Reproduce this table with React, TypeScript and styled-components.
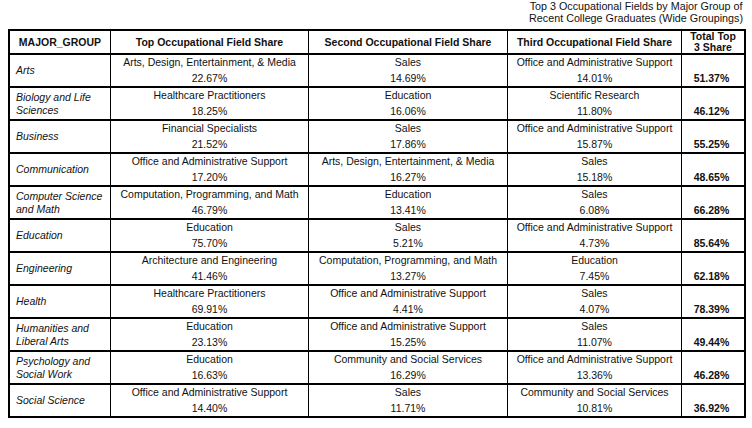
import React from "react";
import styled, { createGlobalStyle } from "styled-components";

const GlobalStyle = createGlobalStyle`
  html, body {
    margin: 0;
    padding: 0;
    background: #ffffff;
  }
  body {
    font-family: "Liberation Sans", Arial, sans-serif;
    color: #111;
  }
`;

const Page = styled.div`
  width: 752px;
  height: 428px;
  padding: 1px 0 0 8px;
  box-sizing: border-box;
  overflow: hidden;
`;

const TitleBar = styled.div`
  display: flex;
  justify-content: flex-end;
  padding-right: 9px;
  margin-bottom: 5px;
`;

const Title = styled.div`
  font-size: 10.75px;
  line-height: 11.5px;
  text-align: center;
  color: #111;
`;

const Table = styled.table`
  border-collapse: separate;
  border-spacing: 0;
  table-layout: fixed;
  width: 738px;
  border-top: 2px solid #000;
  border-left: 2px solid #000;
  font-size: 10.5px;
`;

const HeadCell = styled.th<{ $last?: boolean }>`
  height: 22px;
  padding: 0 2px;
  box-sizing: content-box;
  font-weight: bold;
  font-size: 10.5px;
  line-height: 11px;
  text-align: center;
  vertical-align: middle;
  color: #111;
  border-right: ${(p) => (p.$last ? "2px" : "1px")} solid #000;
  border-bottom: 2px solid #000;
`;

const GroupCell = styled.td`
  height: 31px;
  padding: 0 4px 0 6px;
  font-style: italic;
  font-size: 10.5px;
  line-height: 12.5px;
  text-align: left;
  vertical-align: middle;
  border-right: 1px solid #000;
  border-bottom: 2px solid #000;
`;

const FieldCell = styled.td`
  height: 31px;
  padding: 0;
  text-align: center;
  vertical-align: top;
  border-right: 1px solid #000;
  border-bottom: 2px solid #000;
`;

const Line = styled.div`
  line-height: 15.5px;
  white-space: nowrap;
`;

const TotalCell = styled.td`
  height: 31px;
  padding: 0 3px 0 0;
  text-align: center;
  vertical-align: bottom;
  font-weight: bold;
  line-height: 15.5px;
  border-right: 2px solid #000;
  border-bottom: 2px solid #000;
`;

type Field = [string, string];
type Row = { group: string; fields: Field[]; total: string };

const rows: Row[] = [
  { group: "Arts", fields: [["Arts, Design, Entertainment, & Media", "22.67%"], ["Sales", "14.69%"], ["Office and Administrative Support", "14.01%"]], total: "51.37%" },
  { group: "Biology and Life Sciences", fields: [["Healthcare Practitioners", "18.25%"], ["Education", "16.06%"], ["Scientific Research", "11.80%"]], total: "46.12%" },
  { group: "Business", fields: [["Financial Specialists", "21.52%"], ["Sales", "17.86%"], ["Office and Administrative Support", "15.87%"]], total: "55.25%" },
  { group: "Communication", fields: [["Office and Administrative Support", "17.20%"], ["Arts, Design, Entertainment, & Media", "16.27%"], ["Sales", "15.18%"]], total: "48.65%" },
  { group: "Computer Science and Math", fields: [["Computation, Programming, and Math", "46.79%"], ["Education", "13.41%"], ["Sales", "6.08%"]], total: "66.28%" },
  { group: "Education", fields: [["Education", "75.70%"], ["Sales", "5.21%"], ["Office and Administrative Support", "4.73%"]], total: "85.64%" },
  { group: "Engineering", fields: [["Architecture and Engineering", "41.46%"], ["Computation, Programming, and Math", "13.27%"], ["Education", "7.45%"]], total: "62.18%" },
  { group: "Health", fields: [["Healthcare Practitioners", "69.91%"], ["Office and Administrative Support", "4.41%"], ["Sales", "4.07%"]], total: "78.39%" },
  { group: "Humanities and Liberal Arts", fields: [["Education", "23.13%"], ["Office and Administrative Support", "15.25%"], ["Sales", "11.07%"]], total: "49.44%" },
  { group: "Psychology and Social Work", fields: [["Education", "16.63%"], ["Community and Social Services", "16.29%"], ["Office and Administrative Support", "13.36%"]], total: "46.28%" },
  { group: "Social Science", fields: [["Office and Administrative Support", "14.40%"], ["Sales", "11.71%"], ["Community and Social Services", "10.81%"]], total: "36.92%" },
];

export default function App() {
  return (
    <Page>
      <GlobalStyle />
      <TitleBar>
        <Title>
          Top 3 Occupational Fields by Major Group of
          <br />
          Recent College Graduates (Wide Groupings)
        </Title>
      </TitleBar>
      <Table>
        <colgroup>
          <col style={{ width: 101 }} />
          <col style={{ width: 198 }} />
          <col style={{ width: 199 }} />
          <col style={{ width: 174 }} />
          <col style={{ width: 64 }} />
        </colgroup>
        <thead>
          <tr>
            <HeadCell>MAJOR_GROUP</HeadCell>
            <HeadCell>Top Occupational Field Share</HeadCell>
            <HeadCell>Second Occupational Field Share</HeadCell>
            <HeadCell>Third Occupational Field Share</HeadCell>
            <HeadCell $last>
              Total Top
              <br />3 Share
            </HeadCell>
          </tr>
        </thead>
        <tbody>
          {rows.map((r) => (
            <tr key={r.group}>
              <GroupCell>{r.group}</GroupCell>
              {r.fields.map(([name, pct], i) => (
                <FieldCell key={i}>
                  <Line>{name}</Line>
                  <Line>{pct}</Line>
                </FieldCell>
              ))}
              <TotalCell>{r.total}</TotalCell>
            </tr>
          ))}
        </tbody>
      </Table>
    </Page>
  );
}
